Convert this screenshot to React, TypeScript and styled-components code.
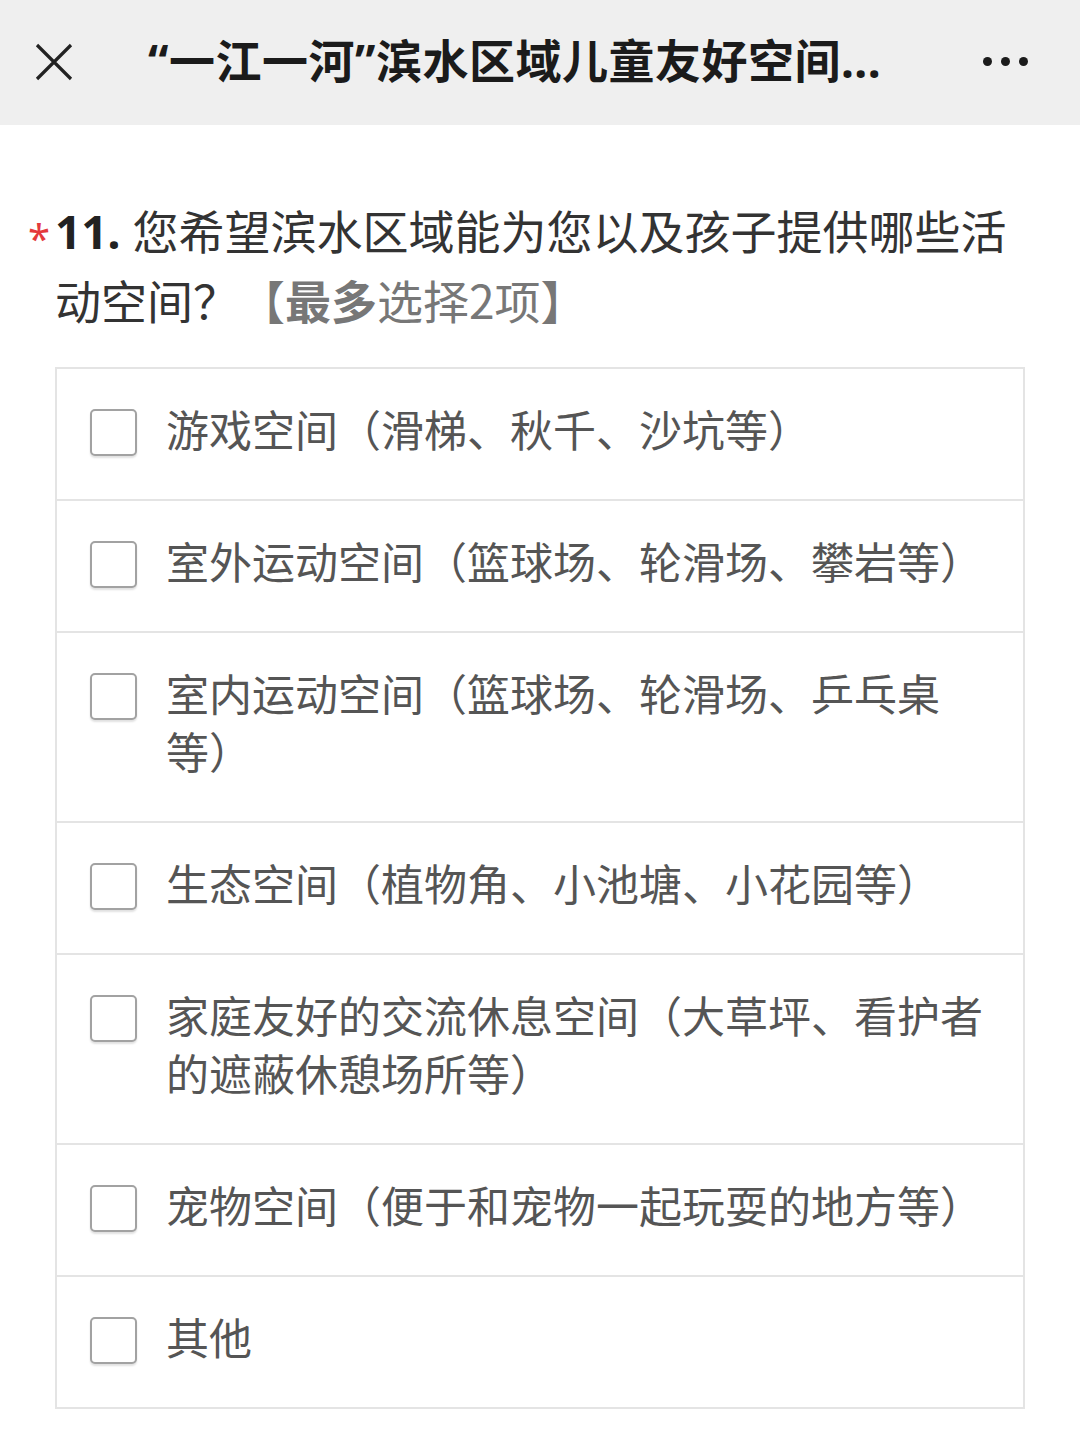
import React from "react";
import styled, { createGlobalStyle } from "styled-components";

const GlobalStyle = createGlobalStyle`
  body {
    margin: 0;
    background: #ffffff;
    font-family: "Noto Sans CJK SC", "Noto Sans", sans-serif;
  }
`;

const Page = styled.div`
  width: 1080px;
  min-height: 1441px;
  background: #ffffff;
`;

const Header = styled.div`
  display: flex;
  align-items: center;
  height: 125px;
  background: #efefef;
  box-sizing: border-box;
  padding: 0 52px 0 34px;
`;

const CloseButton = styled.div`
  width: 40px;
  height: 40px;
  display: flex;
  align-items: center;
  justify-content: center;
  margin-top: -2px;
`;

const Title = styled.div`
  flex: 1;
  margin: -10px 0 0 74px;
  font-family: "Noto Sans", "Noto Sans CJK SC", sans-serif;
  font-size: 46px;
  font-weight: 700;
  color: #1b1b1b;
  white-space: nowrap;
  overflow: hidden;
  letter-spacing: 0.5px;
`;

const Dots = styled.div`
  display: flex;
  gap: 9px;
  margin-top: -2px;
`;

const Dot = styled.span`
  width: 9px;
  height: 9px;
  border-radius: 50%;
  background: #1b1b1b;
`;

const Question = styled.div`
  padding: 70px 55px 0 55px;
  font-size: 46px;
  line-height: 68px;
  color: #333333;
`;

const Star = styled.span`
  display: inline-block;
  width: 27px;
  margin-left: -27px;
  color: #e4393c;
  font-family: "Noto Sans", sans-serif;
  font-size: 40px;
  line-height: 0;
  vertical-align: -4px;
`;

const Number = styled.span`
  font-family: "Noto Sans", "Noto Sans CJK SC", sans-serif;
  font-weight: 700;
  color: #222222;
  margin-right: 12px;
`;

const Hint = styled.span`
  color: #777777;
`;

const HintStrong = styled.b`
  font-weight: 700;
`;

const OptionList = styled.div`
  margin: 34px 55px 0 55px;
  border: 2px solid #e4e4e4;
`;

const OptionRow = styled.div`
  display: flex;
  align-items: flex-start;
  padding: 30px 30px 42px 33px;
  border-top: 2px solid #e4e4e4;

  &:first-child {
    border-top: none;
  }
`;

const Checkbox = styled.span`
  flex: 0 0 auto;
  width: 47px;
  height: 47px;
  box-sizing: border-box;
  margin-top: 10px;
  border: 2px solid #a2a2a2;
  border-radius: 5px;
  box-shadow: 0 2px 2px rgba(0, 0, 0, 0.12);
  background: #ffffff;
`;

const OptionText = styled.div`
  margin-left: 29px;
  font-size: 43px;
  line-height: 58px;
  color: #555555;
`;

const options = [
  "游戏空间（滑梯、秋千、沙坑等）",
  "室外运动空间（篮球场、轮滑场、攀岩等）",
  "室内运动空间（篮球场、轮滑场、乒乓桌等）",
  "生态空间（植物角、小池塘、小花园等）",
  "家庭友好的交流休息空间（大草坪、看护者的遮蔽休憩场所等）",
  "宠物空间（便于和宠物一起玩耍的地方等）",
  "其他",
];

const App: React.FC = () => {
  return (
    <Page>
      <GlobalStyle />
      <Header>
        <CloseButton>
          <svg width="40" height="40" viewBox="0 0 40 40">
            <path
              d="M3 3 L37 37 M37 3 L3 37"
              stroke="#222"
              strokeWidth="3.2"
              fill="none"
            />
          </svg>
        </CloseButton>
        <Title>“一江一河”滨水区域儿童友好空间...</Title>
        <Dots>
          <Dot />
          <Dot />
          <Dot />
        </Dots>
      </Header>
      <Question>
        <Star>*</Star>
        <Number>11.</Number>
        您希望滨水区域能为您以及孩子提供哪些活动空间？
        <Hint>
          【<HintStrong>最多</HintStrong>选择2项】
        </Hint>
      </Question>
      <OptionList>
        {options.map((text) => (
          <OptionRow key={text}>
            <Checkbox />
            <OptionText>{text}</OptionText>
          </OptionRow>
        ))}
      </OptionList>
    </Page>
  );
};

export default App;
